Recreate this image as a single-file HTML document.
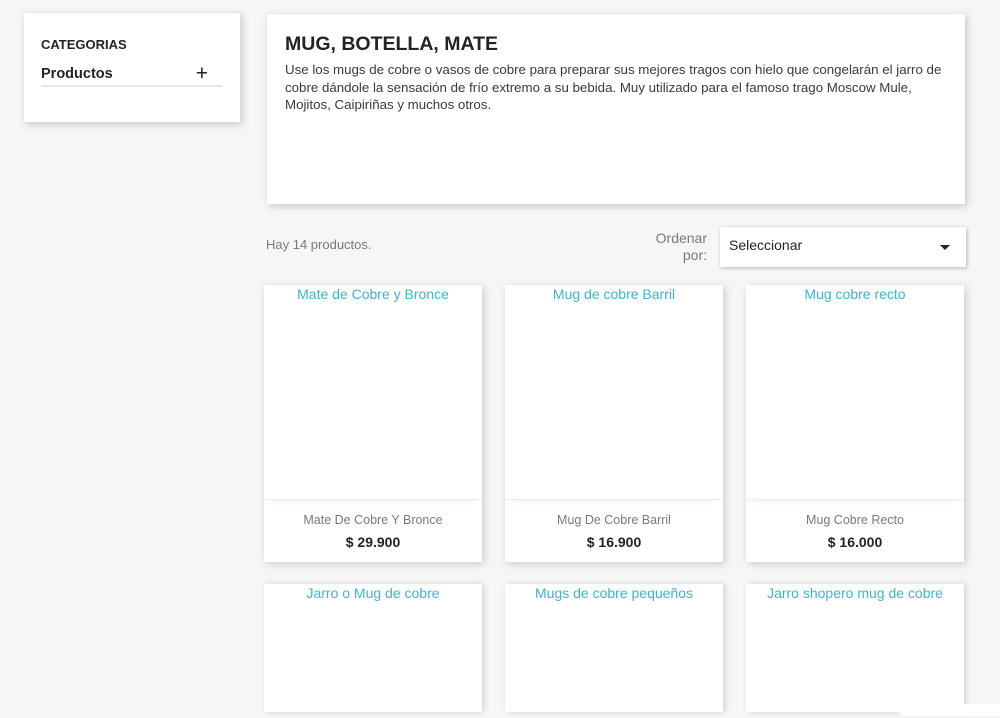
<!DOCTYPE html>
<html><head><meta charset="utf-8"><style>
*{box-sizing:border-box;margin:0;padding:0}
html{width:1000px;height:718px;overflow:hidden}
body{width:1000px;height:718px;overflow:hidden;background:#f6f6f6;font-family:"Liberation Sans",sans-serif;color:#232323;position:relative}
.box{position:absolute;background:#fff;box-shadow:2px 2px 8px rgba(0,0,0,.2)}
.cat{left:24px;top:13px;width:216px;height:109px}
.cat h4{position:absolute;left:17px;top:24px;font-size:13px;font-weight:bold}
.cat .p{position:absolute;left:17px;top:53px;width:181px;height:21px;border-bottom:2px solid #e6e6e6;font-size:14.5px;font-weight:bold}
.cat .plus{position:absolute;right:14px;top:-4px;font-size:21px;font-weight:normal}
.hdr{left:267px;top:14px;width:698px;height:190px}
.hdr h1{position:absolute;left:18px;top:19px;font-size:19.5px;font-weight:bold}
.hdr p{position:absolute;left:18px;top:47px;width:662px;font-size:13.3px;line-height:17.5px;color:#3a3a3a}
.count{position:absolute;left:266px;top:237px;font-size:13px;color:#7a7a7a}
.ord{position:absolute;left:640px;top:230px;width:67px;text-align:right;font-size:14px;color:#7a7a7a;line-height:17px}
.sel{position:absolute;left:720px;top:227px;width:246px;height:40px;background:#fff;box-shadow:1px 1px 4px rgba(0,0,0,.25);font-size:14px;padding:10px 9px;color:#232323}
.sel:after{content:"";position:absolute;right:16px;top:18px;border:5px solid transparent;border-top-color:#232323}
.card{position:absolute;width:218px;background:#fff;box-shadow:2px 2px 8px rgba(0,0,0,.18);text-align:center;overflow:hidden}
.card .img{height:215px;font-size:14px;color:#3fb4d0;padding-top:1px;border-bottom:1px solid #f0f0f0;box-shadow:0 6px 6px -6px rgba(0,0,0,.1)}
.card .n{font-size:12.5px;color:#7a7a7a;margin-top:13px}
.card .pr{font-size:14px;font-weight:bold;margin-top:7px}
.c2{height:128px;box-shadow:2px 0 6px rgba(0,0,0,.15)}
.c2 .img{height:120px;border:0;box-shadow:none}
</style></head><body>
<div class="box cat"><h4>CATEGORIAS</h4><div class="p">Productos<span class="plus">+</span></div></div>
<div class="box hdr"><h1>MUG, BOTELLA, MATE</h1><p>Use los mugs de cobre o vasos de cobre para preparar sus mejores tragos con hielo que congelarán el jarro de cobre dándole la sensación de frío extremo a su bebida. Muy utilizado para el famoso trago Moscow Mule, Mojitos, Caipiriñas y muchos otros.</p></div>
<div class="count">Hay 14 productos.</div>
<div class="ord">Ordenar por:</div>
<div class="sel">Seleccionar</div>
<div class="card" style="left:264px;top:285px;height:277px"><div class="img">Mate de Cobre y Bronce</div><div class="n">Mate De Cobre Y Bronce</div><div class="pr">$ 29.900</div></div>
<div class="card" style="left:505px;top:285px;height:277px"><div class="img">Mug de cobre Barril</div><div class="n">Mug De Cobre Barril</div><div class="pr">$ 16.900</div></div>
<div class="card" style="left:746px;top:285px;height:277px"><div class="img">Mug cobre recto</div><div class="n">Mug Cobre Recto</div><div class="pr">$ 16.000</div></div>
<div class="card c2" style="left:264px;top:584px"><div class="img">Jarro o Mug de cobre</div></div>
<div class="card c2" style="left:505px;top:584px"><div class="img">Mugs de cobre pequeños</div></div>
<div class="card c2" style="left:746px;top:584px"><div class="img">Jarro shopero mug de cobre</div></div>
<div style="position:absolute;left:900px;top:704px;width:100px;height:12px;background:#fff"></div>
</body></html>
